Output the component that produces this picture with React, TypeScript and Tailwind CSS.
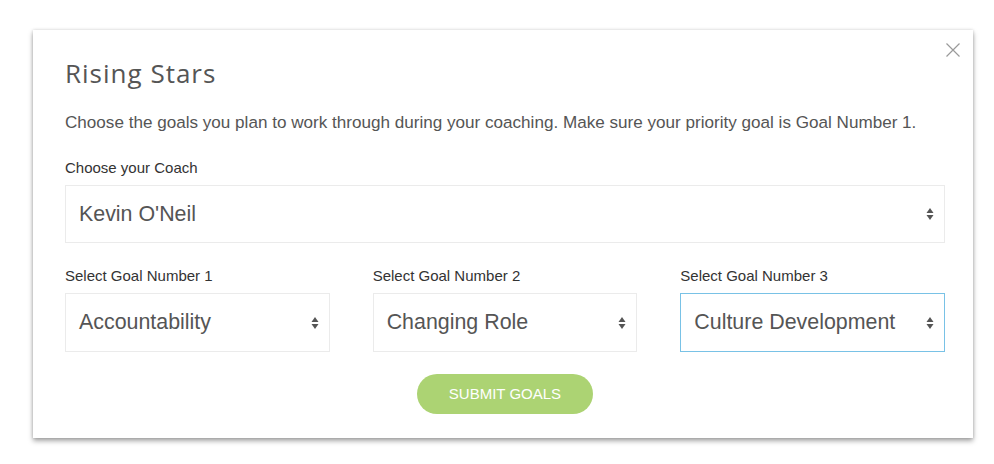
function SelectArrows() {
  return (
    <svg width="8" height="14" viewBox="0 0 8 14" className="shrink-0">
      <path d="M4 1 L7.5 6 H0.5 Z" fill="#555" />
      <path d="M4 13 L7.5 8 H0.5 Z" fill="#555" />
    </svg>
  )
}

interface FakeSelectProps {
  value: string
  height: string
  focused?: boolean
}

function FakeSelect({ value, height, focused }: FakeSelectProps) {
  return (
    <div
      className={`flex items-center justify-between bg-white pl-[13px] pr-[10px] ${height} ${
        focused ? 'border border-[#79c2e6]' : 'border border-[#ebebeb]'
      }`}
    >
      <span className="text-[21.4px] text-[#555]">{value}</span>
      <SelectArrows />
    </div>
  )
}

const goals = ['Accountability', 'Changing Role', 'Culture Development']

export default function App() {
  return (
    <div className="min-h-[464px] bg-white pt-[30px] font-['Liberation_Sans',Arial,sans-serif]">
      <div className="relative ml-[33px] w-[940px] bg-white pb-[24px] pl-[32px] pr-[28px] pt-[28px] shadow-[0_3px_5px_rgba(0,0,0,0.35),0_0_3px_rgba(0,0,0,0.15)]">
        <button className="absolute right-[12px] top-[12px] flex h-[16px] w-[16px] items-center justify-center">
          <svg width="16" height="16" viewBox="0 0 16 16">
            <path d="M1.5 1.5 L14.5 14.5 M14.5 1.5 L1.5 14.5" stroke="#9a9a9a" strokeWidth="1.2" />
          </svg>
        </button>

        <h1 className="font-['Open_Sans',sans-serif] text-[26px] leading-[30px] tracking-[1px] text-[#555]">
          Rising Stars
        </h1>
        <p className="mt-[24px] text-[17.1px] leading-[22px] text-[#555]">
          Choose the goals you plan to work through during your coaching. Make sure your priority goal is Goal Number 1.
        </p>

        <label className="mt-[24px] block text-[15px] leading-[20px] text-[#333]">Choose your Coach</label>
        <div className="mt-[7px]">
          <FakeSelect value="Kevin O'Neil" height="h-[58px]" />
        </div>

        <div className="mt-[23px] grid grid-cols-3 gap-[43px]">
          {goals.map((goal, i) => (
            <div key={goal}>
              <label className="block text-[15px] leading-[20px] text-[#333]">Select Goal Number {i + 1}</label>
              <div className="mt-[7px]">
                <FakeSelect value={goal} height="h-[59px]" focused={i === 2} />
              </div>
            </div>
          ))}
        </div>

        <div className="mt-[22px] flex justify-center">
          <button className="h-[40px] w-[176px] rounded-full bg-[#acd373] text-[15px] uppercase text-white">
            Submit Goals
          </button>
        </div>
      </div>
    </div>
  )
}
